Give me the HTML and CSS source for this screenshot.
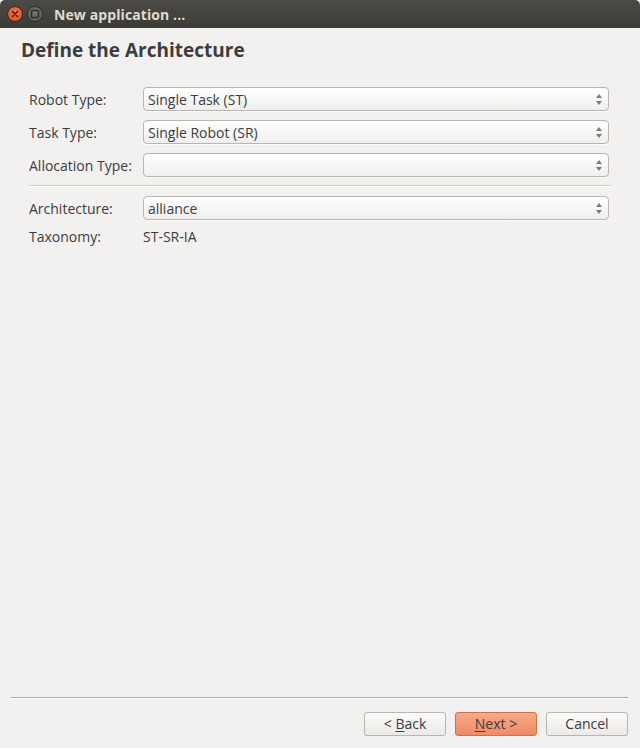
FILE: index.html
```html
<!DOCTYPE html>
<html>
<head>
<meta charset="utf-8">
<link rel="stylesheet" href="styles.css">
</head>
<body>
<div class="window">
  <div class="titlebar">
    <span class="tb-btn tb-close"><svg width="16" height="16" viewBox="0 0 16 16"><path d="M5.5 5.5 L10.5 10.5 M10.5 5.5 L5.5 10.5" stroke="#3a1a10" stroke-width="1.4" stroke-linecap="round"/></svg></span>
    <span class="tb-btn tb-max"><svg width="16" height="16" viewBox="0 0 16 16"><rect x="4.5" y="4.5" width="7" height="7" rx="1" fill="none" stroke="#2e2d2a" stroke-width="1.4"/></svg></span>
    <span class="tb-title">New application ...</span>
  </div>
  <div class="content">
    <h1 class="heading">Define the Architecture</h1>
    <div class="form">
      <div class="row">
        <span class="label">Robot Type:</span>
        <div class="combo"><span>Single Task (ST)</span><span class="arrows"><i class="up"></i><i class="down"></i></span></div>
      </div>
      <div class="row">
        <span class="label">Task Type:</span>
        <div class="combo"><span>Single Robot (SR)</span><span class="arrows"><i class="up"></i><i class="down"></i></span></div>
      </div>
      <div class="row">
        <span class="label">Allocation Type:</span>
        <div class="combo"><span></span><span class="arrows"><i class="up"></i><i class="down"></i></span></div>
      </div>
      <div class="sep"></div>
      <div class="row">
        <span class="label">Architecture:</span>
        <div class="combo"><span>alliance</span><span class="arrows"><i class="up"></i><i class="down"></i></span></div>
      </div>
      <div class="row row-text">
        <span class="label">Taxonomy:</span>
        <span class="value">ST-SR-IA</span>
      </div>
    </div>
  </div>
  <div class="footer">
    <div class="footer-sep"></div>
    <div class="buttons">
      <button class="btn">&lt; <u>B</u>ack</button>
      <button class="btn btn-primary"><u>N</u>ext &gt;</button>
      <button class="btn">Cancel</button>
    </div>
  </div>
</div>
</body>
</html>
```
FILE: styles.css
```css
* { box-sizing: border-box; }
html, body { margin: 0; padding: 0; }
body {
  background: #f2f1f0;
  font-family: "Open Sans", "DejaVu Sans", sans-serif;
  font-size: 14px;
  color: #3c3c3c;
}
.window {
  width: 640px;
  height: 748px;
  display: flex;
  flex-direction: column;
  background: #f2f1f0;
}
.titlebar {
  height: 28px;
  flex: none;
  background: linear-gradient(#4b4a45, #3c3b37);
  border-radius: 5px 5px 0 0;
  display: flex;
  align-items: center;
  padding-left: 7px;
  gap: 4px;
}
.tb-btn {
  width: 16px;
  height: 16px;
  border-radius: 50%;
  display: flex;
}
.tb-close {
  background: radial-gradient(circle at 50% 35%, #f5704a, #dc4a1f);
  border: 1px solid #2e2d2a;
}
.tb-max {
  background: radial-gradient(circle at 50% 35%, #75746f, #5a5955);
  border: 1px solid #2e2d2a;
}
.tb-btn svg { margin: -1px; }
.tb-title {
  margin-left: 7px;
  color: #dfdbd2;
  font-weight: bold;
  font-size: 14px;
  letter-spacing: 0.1px;
}
.content {
  flex: 1;
  padding: 10px 31px 0 21px;
}
.heading {
  margin: 0 0 25px 0;
  font-size: 19px;
  font-weight: bold;
  color: #3c3c3c;
  line-height: 24px;
}
.form {
  display: flex;
  flex-direction: column;
  gap: 9px;
  padding-left: 8px;
}
.row {
  display: grid;
  grid-template-columns: 114px 1fr;
  align-items: center;
  height: 24px;
}
.row-text { height: 16px; margin-top: -2px; }
.label { white-space: nowrap; }
.combo {
  height: 24px;
  border: 1px solid #b9b6b1;
  border-radius: 4px;
  background: linear-gradient(#ffffff, #f0efee);
  display: flex;
  align-items: center;
  justify-content: space-between;
  padding: 0 6px 0 4px;
  box-shadow: 0 1px 0 rgba(255,255,255,0.6);
}
.arrows {
  display: flex;
  flex-direction: column;
  gap: 3px;
  margin-top: 1px;
}
.arrows i {
  display: block;
  width: 0;
  height: 0;
  border-left: 3.5px solid transparent;
  border-right: 3.5px solid transparent;
}
.arrows .up { border-bottom: 4px solid #7b7a77; }
.arrows .down { border-top: 4px solid #7b7a77; }
.sep {
  height: 2px;
  border-top: 1px solid #cfccc8;
  border-bottom: 1px solid #ffffff;
  margin: -1px -2px 0 0;
}
.footer {
  flex: none;
  padding: 0 12px 12px 11px;
}
.footer-sep {
  height: 2px;
  border-top: 1px solid #a8a6a3;
  border-bottom: 1px solid #ffffff;
  margin-bottom: 13px;
}
.buttons {
  display: flex;
  justify-content: flex-end;
  gap: 9px;
}
.btn {
  width: 82px;
  height: 24px;
  font-family: inherit;
  font-size: 14px;
  color: #3c3c3c;
  border: 1px solid #b9b6b1;
  border-radius: 3px;
  background: linear-gradient(#fbfbfa, #ebeae8);
  padding: 0;
  line-height: 20px;
}
.btn u { text-decoration-thickness: 1px; text-underline-offset: 2px; }
.btn-primary {
  background: linear-gradient(#f8a888, #ef8b65);
  border-color: #c9734f;
}
```
